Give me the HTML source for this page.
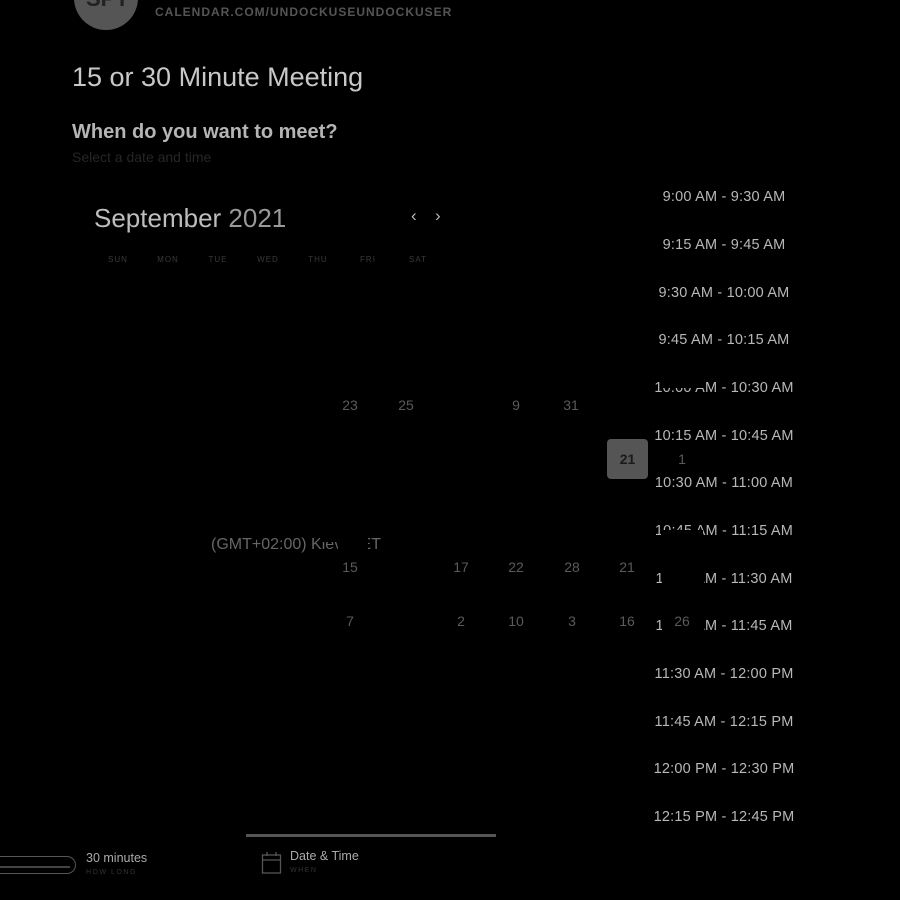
<!DOCTYPE html>
<html><head><meta charset="utf-8"><style>
*{margin:0;padding:0;box-sizing:border-box}
body{width:900px;height:900px;background:#000;overflow:hidden;position:relative;font-family:"Liberation Sans",sans-serif}
.a{position:absolute;white-space:nowrap}
.t{position:absolute;left:624px;width:200px;text-align:center;font-size:14.5px;color:#b8b8b8;letter-spacing:.2px}
.n{position:absolute;width:40px;text-align:center;font-size:14px;color:#5a5a5a;transform:translateX(-20px)}
.d{position:absolute;top:255px;width:40px;text-align:center;font-size:8px;color:#3a3a3a;letter-spacing:1px;transform:translateX(-20px)}
.blk{position:absolute;background:#000}
</style></head><body>
<div class="a" style="left:74px;top:-34px;width:64px;height:64px;border-radius:50%;background:#555"></div>
<div class="a" style="left:86px;top:-14px;font-size:22px;color:#222;font-weight:bold">SPT</div>
<div class="a" style="left:155px;top:5px;font-size:12px;font-weight:bold;color:#555;letter-spacing:1px">CALENDAR.COM/UNDOCKUSEUNDOCKUSER</div>
<div class="a" style="left:72px;top:62px;font-size:27px;color:#c8c8c8">15 or 30 Minute Meeting</div>
<div class="a" style="left:72px;top:121px;font-size:20px;font-weight:bold;color:#b5b5b5">When do you want to meet?</div>
<div class="a" style="left:72px;top:149px;font-size:14px;color:#262626">Select a date and time</div>
<div class="a" style="left:94px;top:203px;font-size:26px;color:#bdbdbd">September <span style="color:#999">2021</span></div>
<div class="a" style="left:411px;top:206px;font-size:17px;color:#bbb">‹</div>
<div class="a" style="left:435px;top:206px;font-size:17px;color:#bbb">›</div>
<div class="d" style="left:118px">SUN</div><div class="d" style="left:168px">MON</div><div class="d" style="left:218px">TUE</div><div class="d" style="left:268px">WED</div><div class="d" style="left:318px">THU</div><div class="d" style="left:368px">FRI</div><div class="d" style="left:418px">SAT</div>

<div class="t" style="top:189px">9:00 AM - 9:30 AM</div>
<div class="t" style="top:237px">9:15 AM - 9:45 AM</div>
<div class="t" style="top:285px">9:30 AM - 10:00 AM</div>
<div class="t" style="top:332px">9:45 AM - 10:15 AM</div>
<div class="t" style="top:380px">10:00 AM - 10:30 AM</div>
<div class="t" style="top:428px">10:15 AM - 10:45 AM</div>
<div class="t" style="top:475px">10:30 AM - 11:00 AM</div>
<div class="t" style="top:523px">10:45 AM - 11:15 AM</div>
<div class="t" style="top:571px">11:00 AM - 11:30 AM</div>
<div class="t" style="top:618px">11:15 AM - 11:45 AM</div>
<div class="t" style="top:666px">11:30 AM - 12:00 PM</div>
<div class="t" style="top:714px">11:45 AM - 12:15 PM</div>
<div class="t" style="top:761px">12:00 PM - 12:30 PM</div>
<div class="t" style="top:809px">12:15 PM - 12:45 PM</div>
<div class="blk" style="left:661px;top:378px;width:42px;height:10px"></div>
<div class="blk" style="left:650px;top:447px;width:60px;height:26px"></div>
<div class="blk" style="left:661px;top:530px;width:42px;height:10px"></div>
<div class="blk" style="left:662px;top:560px;width:42px;height:32px"></div>
<div class="blk" style="left:662px;top:608px;width:42px;height:32px"></div>

<div class="n" style="left:350px;top:397px">23</div><div class="n" style="left:406px;top:397px">25</div><div class="n" style="left:516px;top:397px">9</div><div class="n" style="left:571px;top:397px">31</div>
<div class="a" style="left:607px;top:439px;width:41px;height:40px;border-radius:4px;background:#555;color:#1a1a1a;font-weight:bold;font-size:14px;text-align:center;line-height:40px">21</div>
<div class="n" style="left:682px;top:451px">1</div>
<div class="a" style="left:211px;top:536px;font-size:16px;color:#666">(GMT+02:00) Kiev, EET</div>
<div class="blk" style="left:320px;top:535px;width:18px;height:7px"></div>
<div class="blk" style="left:338px;top:535px;width:30px;height:24px"></div>
<div class="n" style="left:350px;top:559px">15</div><div class="n" style="left:461px;top:559px">17</div><div class="n" style="left:516px;top:559px">22</div><div class="n" style="left:572px;top:559px">28</div><div class="n" style="left:627px;top:559px">21</div>
<div class="n" style="left:350px;top:613px">7</div><div class="n" style="left:461px;top:613px">2</div><div class="n" style="left:516px;top:613px">10</div><div class="n" style="left:572px;top:613px">3</div><div class="n" style="left:627px;top:613px">16</div><div class="n" style="left:682px;top:613px">26</div>

<div class="a" style="left:246px;top:834px;width:250px;height:3px;background:#555"></div>
<div class="a" style="left:-30px;top:856px;width:106px;height:18px;border:1.5px solid #555;border-radius:9px"></div>
<div class="a" style="left:0;top:866px;width:70px;height:2px;background:#444"></div>
<div class="a" style="left:86px;top:851px;font-size:12.5px;color:#aaa">30 minutes</div>
<div class="a" style="left:86px;top:869px;font-size:7px;color:#333;letter-spacing:1.5px">HOW LONG</div>
<svg class="a" style="left:261px;top:851px" width="22" height="24" viewBox="0 0 22 24"><rect x="1.5" y="4" width="18" height="18" fill="none" stroke="#555" stroke-width="1.3"/><line x1="1.5" y1="9" x2="19.5" y2="9" stroke="#555" stroke-width="1.3"/><line x1="6" y1="1" x2="6" y2="5" stroke="#555" stroke-width="1.3"/><line x1="15" y1="1" x2="15" y2="5" stroke="#555" stroke-width="1.3"/></svg>
<div class="a" style="left:290px;top:849px;font-size:12.5px;color:#aaa">Date &amp; Time</div>
<div class="a" style="left:290px;top:867px;font-size:7px;color:#333;letter-spacing:1.5px">WHEN</div>
</body></html>
